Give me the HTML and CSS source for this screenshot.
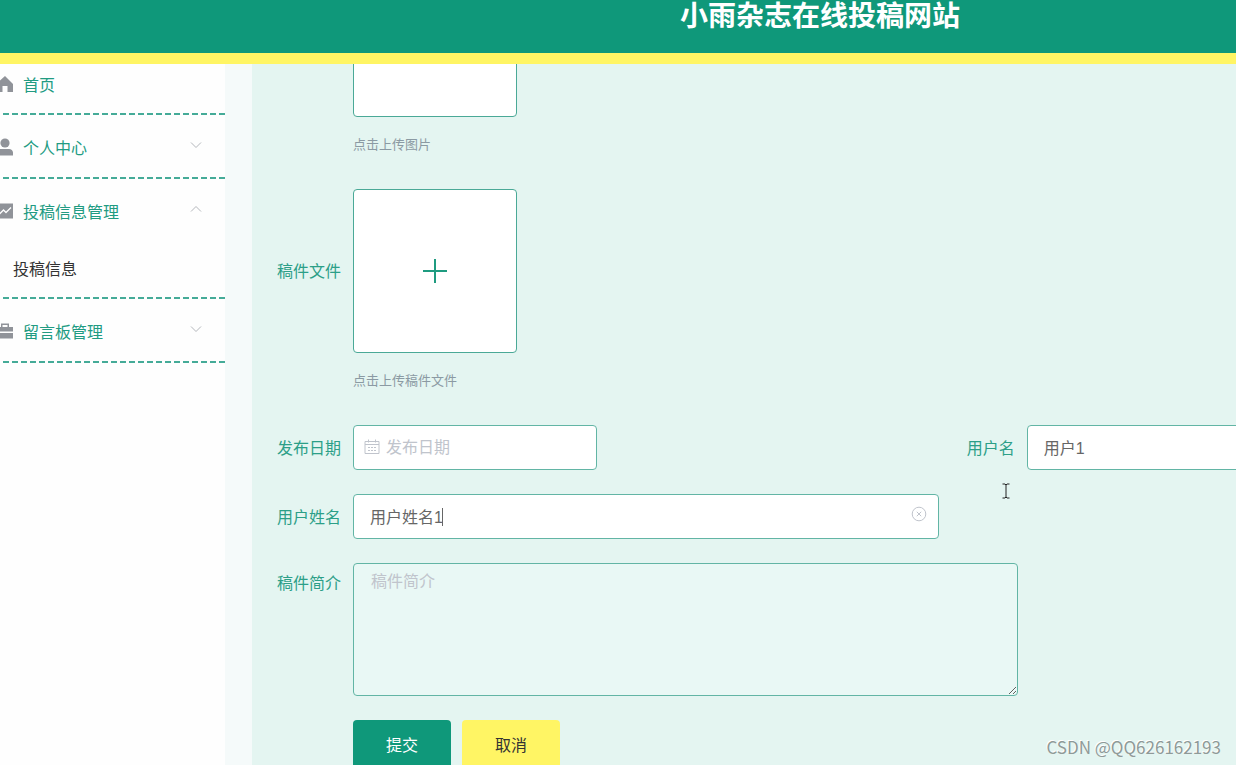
FILE: index.html
```html
<!DOCTYPE html>
<html lang="zh-CN">
<head>
<meta charset="utf-8">
<title>小雨杂志在线投稿网站</title>
<link rel="stylesheet" href="styles.css">
</head>
<body>
<div class="app">
  <header class="topbar"><h1 class="topbar-title">小雨杂志在线投稿网站</h1></header>
  <div class="layout">
    <nav class="sidebar">
      <div class="menu-group">
        <a class="menu-item menu-item-first" href="#">
          <svg class="menu-icon" viewBox="0 0 18 18"><path d="M9 1 0 9v8h6.500v-6h5v6H17V9z"/></svg>
          <span>首页</span>
        </a>
      </div>
      <div class="menu-group">
        <a class="menu-item" href="#">
          <svg class="menu-icon" viewBox="0 0 18 18"><circle cx="9" cy="5" r="4.600"/><path d="M1 17.500v-3a4 4 0 0 1 4-3.500h8a4 4 0 0 1 4 3.500v3z"/></svg>
          <span>个人中心</span>
          <svg class="menu-arrow" viewBox="0 0 12 12"><path d="M1 3.500 6 8.500l5-5"/></svg>
        </a>
      </div>
      <div class="menu-group">
        <a class="menu-item" href="#">
          <svg class="menu-icon" viewBox="0 0 18 18"><path d="M0 1.500h17v15H0z"/><path class="menu-icon-line" d="m3 12.500 4.500-4.500 2.500 2.500L15 5.500"/></svg>
          <span>投稿信息管理</span>
          <svg class="menu-arrow" viewBox="0 0 12 12"><path d="m1 8.500 5-5 5 5"/></svg>
        </a>
        <a class="submenu-item" href="#">投稿信息</a>
      </div>
      <div class="menu-group">
        <a class="menu-item" href="#">
          <svg class="menu-icon" viewBox="0 0 18 18"><path d="M5 5V1.500h8V5h4v4.500H0V5zM6.500 5h5V3h-5zM0 11h17v5.500H0z" fill-rule="evenodd"/></svg>
          <span>留言板管理</span>
          <svg class="menu-arrow" viewBox="0 0 12 12"><path d="M1 3.500 6 8.500l5-5"/></svg>
        </a>
      </div>
    </nav>
    <main class="content">
      <form class="form">
        <div class="row row-scrolled">
          <span class="label"></span>
          <div>
            <button class="upload" type="button" aria-label="点击上传图片"></button>
            <p class="hint">点击上传图片</p>
          </div>
        </div>
        <div class="row">
          <span class="label label-upload" id="file-label">稿件文件</span>
          <div>
            <button class="upload" type="button" aria-labelledby="file-label">
              <svg class="plus" viewBox="0 0 26 26"><path d="M13 1v24M1 13h24"/></svg>
            </button>
            <p class="hint">点击上传稿件文件</p>
          </div>
        </div>
        <div class="columns">
          <div class="row">
            <label class="label label-input" for="date">发布日期</label>
            <div class="field field-date">
              <input class="input input-date" id="date" type="text" placeholder="发布日期">
              <svg class="calendar" viewBox="0 0 16 16"><path d="M1 2.500h14v12H1zM1 5.500h14M4.500.500v3M11.500.500v3M4 8.500h2M7 8.500h2M10 8.500h2M4 11.500h2M7 11.500h2M10 11.500h2"/></svg>
            </div>
          </div>
          <div class="row">
            <label class="label label-input" for="user">用户名</label>
            <div class="field"><input class="input" id="user" type="text" value="用户1"></div>
          </div>
          <div class="row">
            <label class="label label-input" for="name">用户姓名</label>
            <div class="field">
              <input class="input" id="name" type="text" value="用户姓名1">
              <span class="caret"></span>
              <svg class="clear" viewBox="0 0 16 16"><circle cx="8" cy="8" r="6.800"/><path d="m5.800 5.800 4.400 4.400m0-4.400-4.400 4.400"/></svg>
            </div>
          </div>
        </div>
        <div class="row">
          <label class="label label-area" for="intro">稿件简介</label>
          <textarea class="textarea" id="intro" placeholder="稿件简介"></textarea>
        </div>
        <div class="row">
          <span class="label"></span>
          <div class="actions">
            <button class="btn btn-submit" type="submit">提交</button>
            <button class="btn btn-cancel" type="button">取消</button>
          </div>
        </div>
      </form>
    </main>
  </div>
  <svg class="pointer" viewBox="0 0 8 16"><path d="M.500 1h2.500l1 1 1-1h2.500M4 2v12M.500 15h2.500l1-1 1 1h2.500"/></svg>
  <div class="watermark">CSDN @QQ626162193</div>
</div>
</body>
</html>
```
FILE: styles.css
```css
* { box-sizing: border-box; }

body {
  margin: 0;
  font-family: "Liberation Sans", "Noto Sans CJK SC", sans-serif;
  font-size: 16px;
  color: #333;
}

.app {
  position: relative;
  display: flex;
  flex-direction: column;
  height: 100vh;
  overflow: hidden;
}

.topbar {
  flex: none;
  height: 64px;
  padding-left: 404px;
  background: #0f987a;
  border-bottom: 11px solid #fff564;
}

.topbar-title {
  margin: 0;
  font-size: 28px;
  line-height: 34px;
  font-weight: 700;
  text-align: center;
  color: #fff;
}

.layout {
  flex: 1;
  display: flex;
  gap: 27px;
  min-height: 0;
  background: #f5fafa;
}

.sidebar {
  flex: none;
  width: 225px;
  background: #fefefe;
}

.menu-group {
  padding-bottom: 2px;
  background: repeating-linear-gradient(to left, #45ab98 0 6px, transparent 6px 9px) bottom / 100% 2px no-repeat;
}

.menu-item {
  display: flex;
  align-items: center;
  height: 62px;
  padding: 2px 23px 0 0;
  color: #219b82;
  text-decoration: none;
}

.menu-item-first {
  height: 49px;
  padding: 0 0 10px;
}

.menu-icon {
  width: 18px;
  height: 18px;
  margin: 0 9px 0 -4px;
  fill: #909399;
}

.menu-icon-line {
  fill: none;
  stroke: #fff;
  stroke-width: 1.3;
}

.menu-arrow {
  width: 12px;
  height: 12px;
  margin: 0 0 4px auto;
  fill: none;
  stroke: #b4b7bc;
}

.submenu-item {
  display: block;
  height: 56px;
  padding-left: 13px;
  line-height: 58px;
  color: #333;
  text-decoration: none;
}

.content {
  flex: 1;
  min-width: 0;
  overflow: hidden;
  padding-left: 25px;
  background: #e4f5f1;
}

.form {
  display: flex;
  flex-direction: column;
  gap: 24px;
}

.row {
  display: flex;
  align-items: flex-start;
}

.row-scrolled { margin-top: -111px; }

.row-scrolled + .row { margin-top: -6px; }

.label {
  flex: none;
  width: 76px;
  padding-right: 12px;
  text-align: right;
  white-space: nowrap;
  color: #2c9f88;
}

.label-upload { line-height: 166px; }
.label-input { line-height: 47px; }
.label-area { line-height: 42px; }

.upload {
  display: flex;
  align-items: center;
  justify-content: center;
  width: 164px;
  height: 164px;
  padding: 0;
  background: #fff;
  border: 1px solid #4aa997;
  border-radius: 4px;
}

.plus {
  width: 26px;
  height: 26px;
  fill: none;
  stroke: #1f9b80;
  stroke-width: 2;
}

.hint {
  height: 54px;
  margin: 0;
  font-size: 13px;
  line-height: 56px;
  color: #8b9aa3;
}

.columns {
  display: grid;
  grid-template-columns: 69% 69%;
  gap: 22px 12px;
  margin: -6px 0 -2px;
}

.field {
  position: relative;
  flex: 1;
}

.field-date {
  flex: none;
  width: 244px;
}

.input {
  display: block;
  width: 100%;
  height: 45px;
  padding: 0 16px 2px;
  font: inherit;
  color: #666;
  background: #fff;
  border: 1px solid #62b5a5;
  border-radius: 4px;
  outline: none;
}

.input-date { padding: 0 16px 0 32px; }

.input::placeholder,
.textarea::placeholder { color: #c0c4cc; }

.calendar {
  position: absolute;
  top: 14px;
  left: 11px;
  width: 16px;
  height: 16px;
  fill: none;
  stroke: #c0c4cc;
}

.caret {
  position: absolute;
  top: 14px;
  left: 89px;
  width: 1px;
  height: 18px;
  background: #666;
}

.clear {
  position: absolute;
  top: 12px;
  right: 12px;
  width: 16px;
  height: 16px;
  fill: none;
  stroke: #c0c4cc;
}

.textarea {
  width: 665px;
  height: 133px;
  padding: 4px 17px;
  font: inherit;
  color: #666;
  background: #e9f8f5;
  border: 1px solid #62b5a5;
  border-radius: 4px;
  outline: none;
}

.actions {
  display: flex;
  gap: 11px;
}

.btn {
  width: 98px;
  height: 48px;
  padding: 0;
  font: inherit;
  border: 0;
  border-radius: 4px;
}

.btn-submit {
  color: #fff;
  background: #0f987a;
}

.btn-cancel {
  color: #333;
  background: #fff564;
}

.pointer {
  position: absolute;
  top: 483px;
  left: 1002px;
  width: 8px;
  height: 16px;
  fill: none;
  stroke: #222;
}

.watermark {
  position: absolute;
  right: 15px;
  bottom: 6px;
  font-family: "Noto Sans CJK SC", sans-serif;
  font-size: 17px;
  line-height: 24px;
  color: #8f9a98;
  text-shadow: -1px -1px 0 #fff;
}
```
